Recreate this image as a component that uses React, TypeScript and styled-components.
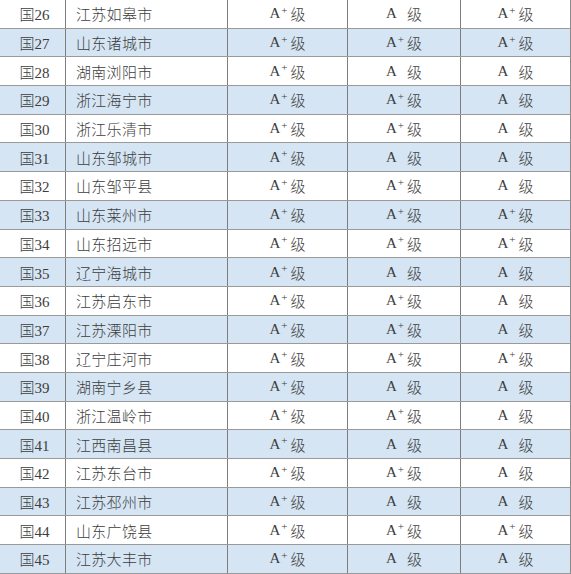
import React from "react";
import styled, { createGlobalStyle } from "styled-components";

type Grade = "A+" | "A";

interface IRow {
  no: number;
  city: string;
  grades: [Grade, Grade, Grade];
}

const rows: IRow[] = [
  { no: 26, city: "江苏如皋市", grades: ["A+", "A", "A+"] },
  { no: 27, city: "山东诸城市", grades: ["A+", "A+", "A+"] },
  { no: 28, city: "湖南浏阳市", grades: ["A+", "A", "A"] },
  { no: 29, city: "浙江海宁市", grades: ["A+", "A+", "A"] },
  { no: 30, city: "浙江乐清市", grades: ["A+", "A+", "A"] },
  { no: 31, city: "山东邹城市", grades: ["A+", "A", "A"] },
  { no: 32, city: "山东邹平县", grades: ["A+", "A+", "A"] },
  { no: 33, city: "山东莱州市", grades: ["A+", "A+", "A+"] },
  { no: 34, city: "山东招远市", grades: ["A+", "A+", "A+"] },
  { no: 35, city: "辽宁海城市", grades: ["A+", "A", "A"] },
  { no: 36, city: "江苏启东市", grades: ["A+", "A+", "A"] },
  { no: 37, city: "江苏溧阳市", grades: ["A+", "A+", "A"] },
  { no: 38, city: "辽宁庄河市", grades: ["A+", "A+", "A+"] },
  { no: 39, city: "湖南宁乡县", grades: ["A+", "A", "A"] },
  { no: 40, city: "浙江温岭市", grades: ["A+", "A+", "A"] },
  { no: 41, city: "江西南昌县", grades: ["A+", "A", "A"] },
  { no: 42, city: "江苏东台市", grades: ["A+", "A+", "A"] },
  { no: 43, city: "江苏邳州市", grades: ["A+", "A", "A"] },
  { no: 44, city: "山东广饶县", grades: ["A+", "A+", "A+"] },
  { no: 45, city: "江苏大丰市", grades: ["A+", "A", "A"] },
];

const GradeText = ({ grade }: { grade: Grade }) => (
  <>
    A<Plus $hidden={grade === "A"}>+</Plus>
    <Level>级</Level>
  </>
);

export default () => (
  <>
    <GlobalStyle />
    <Table>
      {rows.map((r, i) => (
        <Row key={r.no} $shaded={i % 2 === 1}>
          <NoCell>国{r.no}</NoCell>
          <CityCell>{r.city}</CityCell>
          {r.grades.map((g, j) => (
            <GradeCell key={j}>
              <GradeText grade={g} />
            </GradeCell>
          ))}
        </Row>
      ))}
    </Table>
  </>
);

const GlobalStyle = createGlobalStyle`
  body {
    margin: 0;
    background: #ffffff;
    font-family: "Liberation Serif", "Noto Sans CJK SC", serif;
  }
`;

const Table = styled.div`
  width: 571px;
  height: 574px;
  overflow: hidden;
  display: flex;
  flex-direction: column;
`;

const Row = styled.div<{ $shaded: boolean }>`
  display: grid;
  grid-template-columns: 66px 162px 120px 113px 109px;
  height: 28.7px;
  flex: none;
  box-sizing: border-box;
  border-bottom: 1px solid #9a9a9a;
  border-right: 1px solid #8a8a8a;
  background: ${(p) => (p.$shaded ? "#d5e5f4" : "#ffffff")};
  color: #3d3d3d;
  font-size: 15px;
`;

const Cell = styled.div`
  display: flex;
  align-items: center;
  box-sizing: border-box;
  border-right: 1px solid #7e7e7e;
  white-space: nowrap;
  font-weight: 300;
`;

const NoCell = styled(Cell)`
  justify-content: center;
  padding-left: 4px;
`;

const CityCell = styled(Cell)`
  padding-left: 10px;
  letter-spacing: 0.3px;
`;

const GradeCell = styled(Cell)`
  justify-content: center;
  &:last-child {
    border-right: none;
  }
`;

const Plus = styled.span<{ $hidden: boolean }>`
  font-size: 11px;
  position: relative;
  top: -4px;
  margin-left: 1px;
  visibility: ${(p) => (p.$hidden ? "hidden" : "visible")};
`;

const Level = styled.span`
  margin-left: 3px;
`;
